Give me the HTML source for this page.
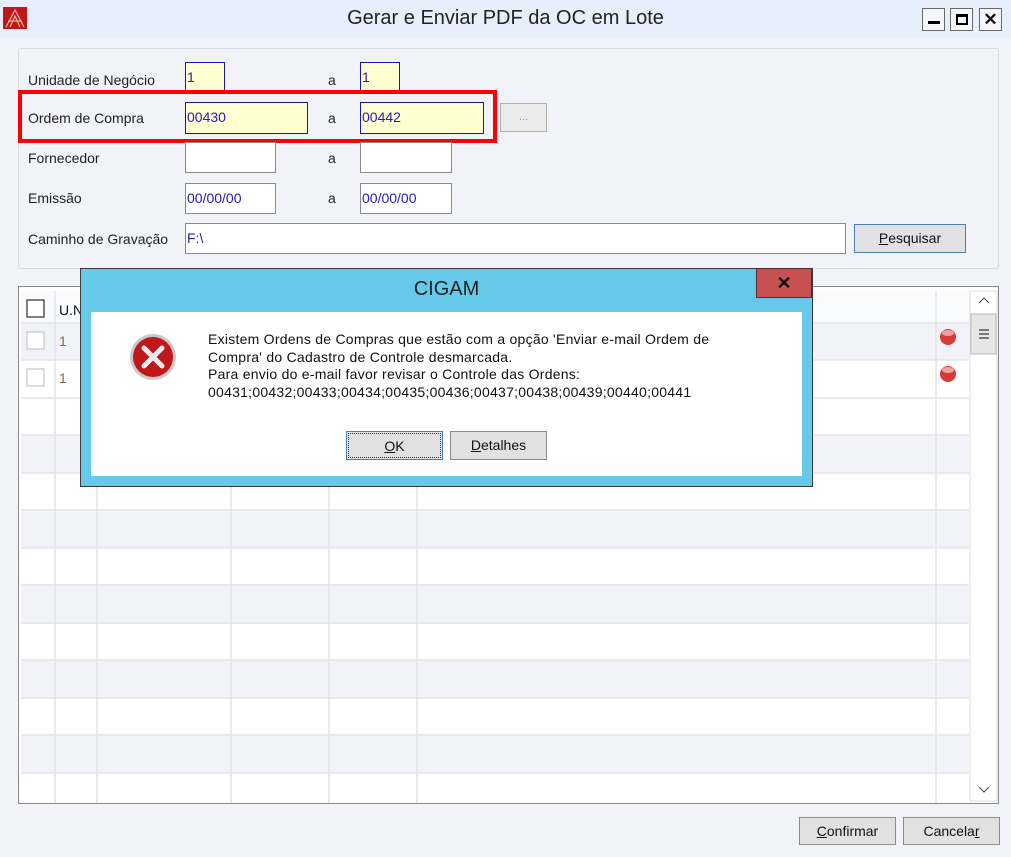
<!DOCTYPE html>
<html><head><meta charset="utf-8"><style>
*{box-sizing:border-box;margin:0;padding:0}
body{width:1011px;height:857px;overflow:hidden;background:#f1f3f9;font-family:"Liberation Sans",sans-serif;font-size:14px;color:#111;position:relative}
.a{position:absolute}
.lbl{position:absolute;font-size:14px;color:#222}
.inp{position:absolute;background:#fff;border:1px solid #8a8a8a;font-size:14px;color:#2a1ab0;padding:0 1px;line-height:28px}
.yel{background:#fffdd2;border:1px solid #1a1a9a}
.btn{position:absolute;background:#e1e1e1;border:1px solid #8c8c8c;text-align:center;font-size:14px;color:#111}
.wb{position:absolute;top:8px;width:23px;height:23px;border:1px solid #6a6a6a;background:#f4f6fb}
</style></head><body>
<div class="a" style="left:0;top:0;width:1011px;height:37px;background:#e8effc"></div>
<svg class="a" style="left:3px;top:7px" width="24" height="22"><rect width="24" height="22" fill="#c01818"/><path d="M3 20 L12 3 L21 20 M7 20 L12 9 L17 20 M5 14 H19" stroke="#f3b0a0" stroke-width="1.2" fill="none"/></svg>
<div class="a" style="left:0;width:1011px;top:7px;text-align:center;font-size:20px;color:#222">Gerar e Enviar PDF da OC em Lote</div>
<div class="wb" style="left:922px"><div class="a" style="left:5px;top:12px;width:12px;height:3px;background:#000"></div></div>
<div class="wb" style="left:950px"><div class="a" style="left:5px;top:5px;width:12px;height:11px;border:2px solid #000;border-top-width:3px"></div></div>
<div class="wb" style="left:979px;text-align:center;font-weight:bold;font-size:17px;line-height:21px">✕</div>
<div class="a" style="left:18px;top:48px;width:981px;height:221px;border:1px solid #d8dce4;border-radius:3px"></div>
<div class="lbl" style="left:28px;top:72px">Unidade de Negócio</div>
<div class="inp yel" style="left:185px;top:62px;width:40px;height:30px">1</div>
<div class="lbl" style="left:328px;top:72px">a</div>
<div class="inp yel" style="left:360px;top:62px;width:40px;height:30px">1</div>
<div class="lbl" style="left:28px;top:110px">Ordem de Compra</div>
<div class="inp yel" style="left:185px;top:102px;width:123px;height:32px">00430</div>
<div class="lbl" style="left:328px;top:110px">a</div>
<div class="inp yel" style="left:360px;top:102px;width:124px;height:32px">00442</div>
<div class="btn" style="left:500px;top:103px;width:47px;height:29px;background:#ebebeb;border-color:#b0b0b0;color:#999;font-size:11px;line-height:26px">...</div>
<div class="a" style="left:18px;top:90px;width:479px;height:53px;border:4px solid #ff0000"></div>
<div class="lbl" style="left:28px;top:150px">Fornecedor</div>
<div class="inp" style="left:185px;top:142px;width:91px;height:31px"></div>
<div class="lbl" style="left:328px;top:150px">a</div>
<div class="inp" style="left:360px;top:142px;width:92px;height:31px"></div>
<div class="lbl" style="left:28px;top:190px">Emissão</div>
<div class="inp" style="left:185px;top:183px;width:91px;height:31px">00/00/00</div>
<div class="lbl" style="left:328px;top:190px">a</div>
<div class="inp" style="left:360px;top:183px;width:92px;height:31px">00/00/00</div>
<div class="lbl" style="left:28px;top:231px">Caminho de Gravação</div>
<div class="inp" style="left:185px;top:223px;width:661px;height:31px">F:\</div>
<div class="btn" style="left:854px;top:224px;width:112px;height:29px;border-color:#4a7fb0;line-height:27px"><u>P</u>esquisar</div>
<div class="a" style="left:18px;top:286px;width:981px;height:518px;border:1px solid #8a8a8a;background:#fff;overflow:hidden">
<svg width="981" height="518">
<g>
<rect x="2" y="4" width="948" height="32" fill="#fafbfd"/>
<rect x="2" y="36" width="948" height="37" fill="#f1f3f8"/>
<rect x="2" y="149" width="948" height="37" fill="#f1f3f8"/>
<rect x="2" y="224" width="948" height="37" fill="#f1f3f8"/>
<rect x="2" y="299" width="948" height="37" fill="#f1f3f8"/>
<rect x="2" y="374" width="948" height="37" fill="#f1f3f8"/>
<rect x="2" y="449" width="948" height="37" fill="#f1f3f8"/>
</g>
<g stroke="#e3e4e8" stroke-width="1.5">
<line x1="36" y1="4" x2="36" y2="518"/><line x1="78" y1="4" x2="78" y2="518"/><line x1="212" y1="4" x2="212" y2="518"/><line x1="310" y1="4" x2="310" y2="518"/><line x1="398" y1="4" x2="398" y2="518"/><line x1="917" y1="4" x2="917" y2="518"/>
<line x1="2" y1="36" x2="950" y2="36"/><line x1="2" y1="73" x2="950" y2="73"/><line x1="2" y1="111" x2="950" y2="111"/><line x1="2" y1="148" x2="950" y2="148"/><line x1="2" y1="186" x2="950" y2="186"/><line x1="2" y1="223" x2="950" y2="223"/><line x1="2" y1="261" x2="950" y2="261"/><line x1="2" y1="298" x2="950" y2="298"/><line x1="2" y1="336" x2="950" y2="336"/><line x1="2" y1="373" x2="950" y2="373"/><line x1="2" y1="411" x2="950" y2="411"/><line x1="2" y1="448" x2="950" y2="448"/><line x1="2" y1="486" x2="950" y2="486"/>
</g>
<rect x="8" y="13" width="17" height="17" fill="#fff" stroke="#555" stroke-width="1.5"/>
<rect x="8" y="45" width="17" height="17" fill="#fff" stroke="#bbb"/>
<rect x="8" y="82" width="17" height="17" fill="#fff" stroke="#bbb"/>
<text x="40" y="28" font-size="14" fill="#111" font-family="Liberation Sans">U.N</text>
<text x="40" y="59" font-size="14" fill="#8a6a3a" font-family="Liberation Sans">1</text>
<text x="40" y="96" font-size="14" fill="#8a6a3a" font-family="Liberation Sans">1</text>
<circle cx="929" cy="50" r="8" fill="#d83a3a"/><ellipse cx="929" cy="46" rx="6" ry="3" fill="#f4a0a0"/>
<circle cx="929" cy="87" r="8" fill="#d83a3a"/><ellipse cx="929" cy="83" rx="6" ry="3" fill="#f4a0a0"/>
<rect x="951" y="4" width="27" height="510" fill="#fff" stroke="#ddd"/>
<rect x="952" y="27" width="25" height="40" fill="#e6e6e6" stroke="#bbb"/>
<path d="M960 16 L965 11 L970 16" stroke="#444" fill="none"/>
<path d="M960 500 L965 505 L970 500" stroke="#444" fill="none"/>
<path d="M960 43 H970 M960 47 H970 M960 51 H970" stroke="#555" stroke-width="1.5"/>
</svg></div>
<div class="btn" style="left:799px;top:817px;width:97px;height:28px;line-height:26px"><u>C</u>onfirmar</div>
<div class="btn" style="left:903px;top:817px;width:97px;height:28px;line-height:26px">Cancela<u>r</u></div>
<div class="a" style="left:80px;top:268px;width:733px;height:219px;background:#66c9e9;border:1px solid #3a3a3a"></div>
<div class="a" style="left:80px;top:278px;width:733px;text-align:center;font-size:20px;color:#222">CIGAM</div>
<div class="a" style="left:756px;top:268px;width:56px;height:30px;background:#c75050;border:1px solid #5a2a2a;color:#111;text-align:center;font-weight:bold;font-size:18px;line-height:28px">✕</div>
<div class="a" style="left:91px;top:312px;width:711px;height:164px;background:#fff"></div>
<svg class="a" style="left:129px;top:333px" width="48" height="48"><circle cx="24" cy="24" r="23" fill="#c8c8c8"/><circle cx="24" cy="24" r="20" fill="#c01818"/><path d="M15 15 L33 33 M33 15 L15 33" stroke="#eee" stroke-width="5" stroke-linecap="round"/></svg>
<div class="a" style="left:208px;top:331px;font-size:14px;line-height:17.5px;color:#111;letter-spacing:0.25px">Existem Ordens de Compras que estão com a opção 'Enviar e-mail Ordem de<br>Compra' do Cadastro de Controle desmarcada.<br>Para envio do e-mail favor revisar o Controle das Ordens:<br>00431;00432;00433;00434;00435;00436;00437;00438;00439;00440;00441</div>
<div class="btn" style="left:346px;top:431px;width:97px;height:29px;border-color:#4a7fb0;line-height:25px"><span style="border:1px dotted #333;display:block;margin:1px;height:25px"><u>O</u>K</span></div>
<div class="btn" style="left:450px;top:431px;width:97px;height:29px;line-height:27px"><u>D</u>etalhes</div>
</body></html>
